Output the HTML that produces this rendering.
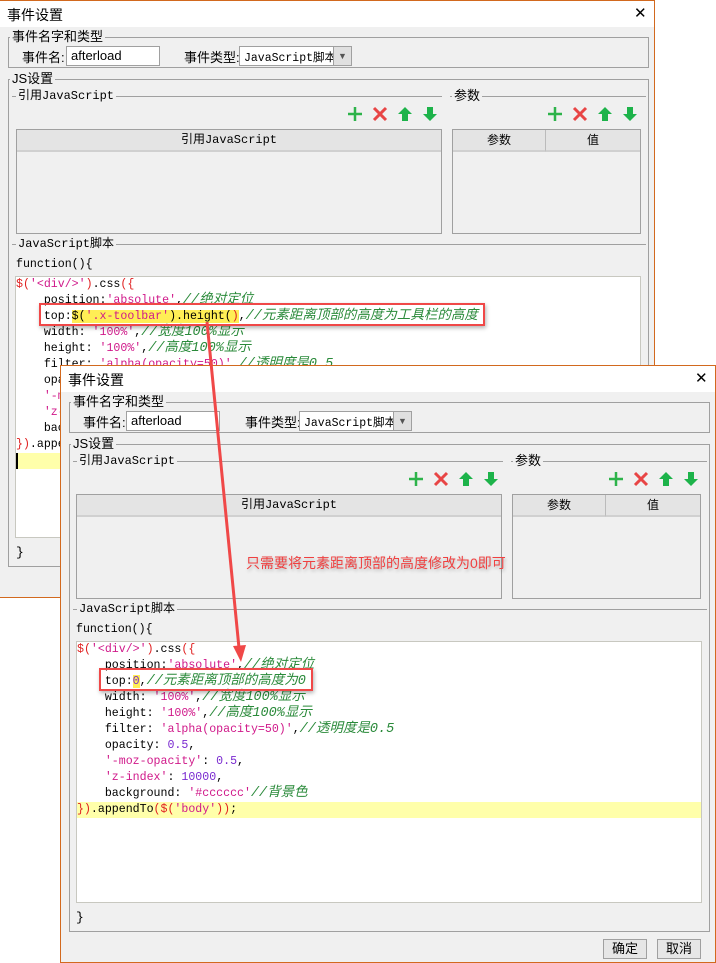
<!DOCTYPE html>
<html><head><meta charset="utf-8">
<style>
*{margin:0;padding:0;box-sizing:border-box}
body{width:716px;height:963px;background:#fff;position:relative;overflow:hidden;font-family:"Liberation Sans","Noto Sans CJK SC",sans-serif;font-size:13px;color:#000}
.win{position:absolute;width:656px;height:598px;border:1px solid #d2691e;background:#f0f0f0}
.win *{position:absolute}
.tb{left:0;top:0;width:654px;height:26px;background:#fff}
.tt{left:7px;top:4px;font-size:14px}
.cl{left:634px;top:3px;font-size:15px;font-family:"DejaVu Sans",sans-serif}
.fs{border:1px solid #a0a0a0}
.lg{background:#f0f0f0;padding:0 2px;font-size:13px;line-height:14px}
.hl{height:1px;background:#a0a0a0}
.inp{background:#fff;border:1px solid #a0a0a0;height:20px;padding:1px 4px;font-size:13px}
.mono{font-family:"Liberation Mono","Noto Sans CJK SC",monospace}
.tbl{background:#f0f0f0;border:1px solid #a0a0a0}
.th{left:0;top:0;right:0;height:22px;background:#e4e4e4;border-bottom:2px solid #d0d0d0;font-size:12px;text-align:center;line-height:20px}
.ed{left:15px;top:275px;width:626px;height:262px;background:#fff;border:1px solid #c8c8c0;overflow:hidden}
.ln{left:0;height:16px;line-height:16px;white-space:pre;font-family:"Liberation Mono","Noto Sans CJK SC",monospace;font-size:11.6px;width:624px}
.s{color:#d0198a}.c{color:#2a8a3a;font-style:italic;font-size:13.5px}.n{color:#7a2ad0}.b{color:#e02020}
.ln span{position:static}
.ic{top:105px}
.btn{border:1px solid #a0a0a0;background:#e6e6e6;width:44px;height:20px;text-align:center;line-height:18px;font-size:13px}
</style></head><body>

<!-- WINDOW 1 -->
<div class="win" style="left:-1px;top:0">
<div class="tb"></div><div class="tt">事件设置</div><div class="cl">✕</div>
<div class="fs" style="left:8px;top:36px;width:641px;height:31px"></div>
<div class="lg" style="left:10px;top:29px">事件名字和类型</div>
<div style="left:22px;top:46px">事件名:</div>
<div class="inp" style="left:66px;top:45px;width:94px">afterload</div>
<div style="left:184px;top:46px">事件类型:</div>
<div class="inp mono" style="left:239px;top:45px;width:113px;font-size:11.5px;padding-top:2px">JavaScript脚本</div>
<div style="left:333px;top:46px;width:18px;height:18px;background:#e0e0e0;border-left:1px solid #a0a0a0;font-size:9px;text-align:center;line-height:18px;color:#555">▼</div>
<div class="fs" style="left:8px;top:78px;width:641px;height:488px"></div>
<div class="lg" style="left:10px;top:71px">JS设置</div>
<div class="hl" style="left:12px;top:95px;width:430px"></div>
<div class="lg mono" style="left:16px;top:88px;font-size:12px">引用JavaScript</div>
<div class="hl" style="left:450px;top:95px;width:196px"></div>
<div class="lg" style="left:452px;top:88px">参数</div>
<svg class="ic" style="left:347px" width="16" height="16"><path d="M8 1V15M1 8H15" stroke="#2db34a" stroke-width="2.5"/></svg>
<svg class="ic" style="left:372px" width="16" height="16"><path d="M2 2L14 14M14 2L2 14" stroke="#e84545" stroke-width="3"/></svg>
<svg class="ic" style="left:397px" width="16" height="16"><path d="M8 1L15 8H11V15H5V8H1Z" fill="#1db34a"/></svg>
<svg class="ic" style="left:422px" width="16" height="16"><path d="M8 15L15 8H11V1H5V8H1Z" fill="#1db34a"/></svg>
<svg class="ic" style="left:547px" width="16" height="16"><path d="M8 1V15M1 8H15" stroke="#2db34a" stroke-width="2.5"/></svg>
<svg class="ic" style="left:572px" width="16" height="16"><path d="M2 2L14 14M14 2L2 14" stroke="#e84545" stroke-width="3"/></svg>
<svg class="ic" style="left:597px" width="16" height="16"><path d="M8 1L15 8H11V15H5V8H1Z" fill="#1db34a"/></svg>
<svg class="ic" style="left:622px" width="16" height="16"><path d="M8 15L15 8H11V1H5V8H1Z" fill="#1db34a"/></svg>
<div class="tbl" style="left:16px;top:128px;width:426px;height:105px"><div class="th mono">引用JavaScript</div></div>
<div class="tbl" style="left:452px;top:128px;width:189px;height:105px"><div class="th" style="width:93px;border-right:1px solid #bbb">参数</div><div class="th" style="left:93px">值</div></div>
<div class="hl" style="left:12px;top:243px;width:634px"></div>
<div class="lg mono" style="left:16px;top:236px;font-size:12px">JavaScript脚本</div>
<div class="mono" style="left:16px;top:257px;font-size:11.6px">function(){</div>
<div class="ed">
<div class="ln" style="top:0"><span class="b">$(</span><span class="s">'&lt;div/&gt;'</span><span class="b">)</span>.css<span class="b">({</span></div>
<div class="ln" style="top:16px">    position:<span class="s">'absolute'</span>,<span class="c">//绝对定位</span></div>
<div class="ln" style="top:32px">    top:<span style="background:#ffee55">$(<span class="s">'.x-toolbar'</span>).height(</span><span class="b" style="background:#ffee55">)</span>,<span class="c">//元素距离顶部的高度为工具栏的高度</span></div>
<div class="ln" style="top:48px">    width: <span class="s">'100%'</span>,<span class="c">//宽度100%显示</span></div>
<div class="ln" style="top:64px">    height: <span class="s">'100%'</span>,<span class="c">//高度100%显示</span></div>
<div class="ln" style="top:80px">    filter: <span class="s">'alpha(opacity=50)'</span>,<span class="c">//透明度是0.5</span></div>
<div class="ln" style="top:96px">    opacity: <span class="n">0.5</span>,</div>
<div class="ln" style="top:112px">    <span class="s">'-moz-opacity'</span>: <span class="n">0.5</span>,</div>
<div class="ln" style="top:128px">    <span class="s">'z-index'</span>: <span class="n">10000</span>,</div>
<div class="ln" style="top:144px">    background: <span class="s">'#cccccc'</span><span class="c">//背景色</span></div>
<div class="ln" style="top:160px"><span class="b">})</span>.appendTo<span class="b">($(</span><span class="s">'body'</span><span class="b">))</span>;</div>
<div class="ln" style="top:176px;background:#ffffaa;border-left:2px solid #000"></div>
</div>
<div class="mono" style="left:16px;top:544px">}</div>
</div>

<!-- WINDOW 2 -->
<div class="win" style="left:60px;top:365px">
<div class="tb"></div><div class="tt">事件设置</div><div class="cl">✕</div>
<div class="fs" style="left:8px;top:36px;width:641px;height:31px"></div>
<div class="lg" style="left:10px;top:29px">事件名字和类型</div>
<div style="left:22px;top:46px">事件名:</div>
<div class="inp" style="left:65px;top:45px;width:94px">afterload</div>
<div style="left:184px;top:46px">事件类型:</div>
<div class="inp mono" style="left:238px;top:45px;width:113px;font-size:11.5px;padding-top:2px">JavaScript脚本</div>
<div style="left:332px;top:46px;width:18px;height:18px;background:#e0e0e0;border-left:1px solid #a0a0a0;font-size:9px;text-align:center;line-height:18px;color:#555">▼</div>
<div class="fs" style="left:8px;top:78px;width:641px;height:488px"></div>
<div class="lg" style="left:10px;top:71px">JS设置</div>
<div class="hl" style="left:12px;top:95px;width:430px"></div>
<div class="lg mono" style="left:16px;top:88px;font-size:12px">引用JavaScript</div>
<div class="hl" style="left:450px;top:95px;width:196px"></div>
<div class="lg" style="left:452px;top:88px">参数</div>
<svg class="ic" style="left:347px" width="16" height="16"><path d="M8 1V15M1 8H15" stroke="#2db34a" stroke-width="2.5"/></svg>
<svg class="ic" style="left:372px" width="16" height="16"><path d="M2 2L14 14M14 2L2 14" stroke="#e84545" stroke-width="3"/></svg>
<svg class="ic" style="left:397px" width="16" height="16"><path d="M8 1L15 8H11V15H5V8H1Z" fill="#1db34a"/></svg>
<svg class="ic" style="left:422px" width="16" height="16"><path d="M8 15L15 8H11V1H5V8H1Z" fill="#1db34a"/></svg>
<svg class="ic" style="left:547px" width="16" height="16"><path d="M8 1V15M1 8H15" stroke="#2db34a" stroke-width="2.5"/></svg>
<svg class="ic" style="left:572px" width="16" height="16"><path d="M2 2L14 14M14 2L2 14" stroke="#e84545" stroke-width="3"/></svg>
<svg class="ic" style="left:597px" width="16" height="16"><path d="M8 1L15 8H11V15H5V8H1Z" fill="#1db34a"/></svg>
<svg class="ic" style="left:622px" width="16" height="16"><path d="M8 15L15 8H11V1H5V8H1Z" fill="#1db34a"/></svg>
<div class="tbl" style="left:15px;top:128px;width:426px;height:105px"><div class="th mono">引用JavaScript</div></div>
<div class="tbl" style="left:451px;top:128px;width:189px;height:105px"><div class="th" style="width:93px;border-right:1px solid #bbb">参数</div><div class="th" style="left:93px">值</div></div>
<div class="hl" style="left:12px;top:243px;width:634px"></div>
<div class="lg mono" style="left:16px;top:236px;font-size:12px">JavaScript脚本</div>
<div class="mono" style="left:15px;top:257px;font-size:11.6px">function(){</div>
<div class="ed">
<div class="ln" style="top:0"><span class="b">$(</span><span class="s">'&lt;div/&gt;'</span><span class="b">)</span>.css<span class="b">({</span></div>
<div class="ln" style="top:16px">    position:<span class="s">'absolute'</span>,<span class="c">//绝对定位</span></div>
<div class="ln" style="top:32px">    top:<span class="n" style="background:#ffee55">0</span>,<span class="c">//元素距离顶部的高度为0</span></div>
<div class="ln" style="top:48px">    width: <span class="s">'100%'</span>,<span class="c">//宽度100%显示</span></div>
<div class="ln" style="top:64px">    height: <span class="s">'100%'</span>,<span class="c">//高度100%显示</span></div>
<div class="ln" style="top:80px">    filter: <span class="s">'alpha(opacity=50)'</span>,<span class="c">//透明度是0.5</span></div>
<div class="ln" style="top:96px">    opacity: <span class="n">0.5</span>,</div>
<div class="ln" style="top:112px">    <span class="s">'-moz-opacity'</span>: <span class="n">0.5</span>,</div>
<div class="ln" style="top:128px">    <span class="s">'z-index'</span>: <span class="n">10000</span>,</div>
<div class="ln" style="top:144px">    background: <span class="s">'#cccccc'</span><span class="c">//背景色</span></div>
<div class="ln" style="top:160px;background:#ffffaa"><span class="b">})</span>.appendTo<span class="b">($(</span><span class="s">'body'</span><span class="b">))</span>;</div>
</div>
<div class="mono" style="left:15px;top:544px">}</div>
<div class="btn" style="left:542px;top:573px">确定</div>
<div class="btn" style="left:596px;top:573px">取消</div>
</div>

<!-- annotations -->
<div style="position:absolute;left:39px;top:303px;width:446px;height:23px;border:2px solid #f04848;box-shadow:1px 2px 4px rgba(0,0,0,.3)"></div>
<div style="position:absolute;left:99px;top:668px;width:214px;height:23px;border:2px solid #f04848;box-shadow:1px 2px 4px rgba(0,0,0,.3)"></div>
<div style="position:absolute;left:246px;top:553px;color:#f04040;font-size:14px;text-shadow:1px 2px 3px rgba(0,0,0,.25)">只需要将元素距离顶部的高度修改为0即可</div>
<svg style="position:absolute;left:0;top:0" width="716" height="963">
<line x1="207" y1="322" x2="239" y2="648" stroke="#f04848" stroke-width="3"/>
<polygon points="233,646 246,645 241,662" fill="#f04848"/>
</svg>
</body></html>
